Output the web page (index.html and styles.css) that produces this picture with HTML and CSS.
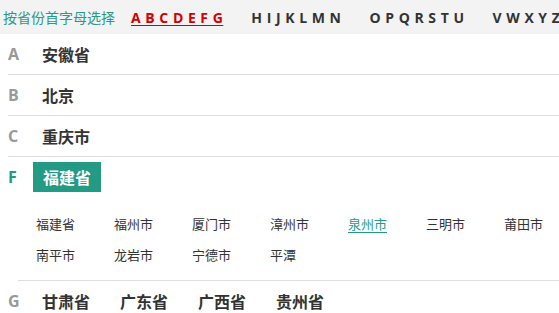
FILE: index.html
```html
<!DOCTYPE html>
<html lang="zh-CN">
<head>
  <meta charset="UTF-8" />
  <title>按省份首字母选择</title>
  <link rel="stylesheet" href="styles.css">
</head>
<body>
  <div class="topbar">
    <span class="tip">按省份首字母选择</span>
    <a class="group active" href="#">A B C D E F G</a>
    <a class="group" href="#">H I J K L M N</a>
    <a class="group" href="#">O P Q R S T U</a>
    <a class="group" href="#">V W X Y Z</a>
  </div>

  <div class="list">
    <div class="row">
      <span class="letter">A</span>
      <span class="prov">安徽省</span>
    </div>
    <div class="row">
      <span class="letter">B</span>
      <span class="prov">北京</span>
    </div>
    <div class="row">
      <span class="letter">C</span>
      <span class="prov">重庆市</span>
    </div>

    <div class="section">
      <div class="row open">
        <span class="letter">F</span>
        <span class="prov selected">福建省</span>
      </div>
      <div class="cities">
        <a href="#">福建省</a>
        <a href="#">福州市</a>
        <a href="#">厦门市</a>
        <a href="#">漳州市</a>
        <a href="#" class="current">泉州市</a>
        <a href="#">三明市</a>
        <a href="#">莆田市</a>
        <a href="#">南平市</a>
        <a href="#">龙岩市</a>
        <a href="#">宁德市</a>
        <a href="#">平潭</a>
      </div>
    </div>

    <div class="row">
      <span class="letter">G</span>
      <span class="prov multi">甘肃省</span>
      <span class="prov multi">广东省</span>
      <span class="prov multi">广西省</span>
      <span class="prov multi">贵州省</span>
    </div>
  </div>
</body>
</html>
```

FILE: styles.css
```css
body {
  margin: 0;
  font-family: "Noto Sans CJK SC", sans-serif;
  background: #fff;
  color: #333;
  overflow: hidden;
}

a {
  text-decoration: none;
  color: inherit;
}

.topbar {
  height: 34px;
  background: #f2f3f2;
  display: flex;
  align-items: center;
  padding-left: 3px;
  white-space: nowrap;
  overflow: hidden;
}

.tip {
  font-size: 14px;
  color: #2a9a88;
  margin-right: 16px;
}

.group {
  font-family: "Open Sans", sans-serif;
  font-weight: bold;
  font-size: 14px;
  letter-spacing: 0.5px;
  color: #333;
  margin-right: 28px;
}

.group.active {
  color: #d40000;
  text-decoration: underline;
  text-underline-offset: 2px;
}

.list {
  padding-left: 8px;
}

.row {
  height: 40px;
  display: flex;
  align-items: center;
  border-bottom: 1px solid #dedede;
}

.letter {
  width: 34px;
  font-family: "Open Sans", sans-serif;
  font-weight: bold;
  font-size: 16px;
  color: #999;
}

.prov {
  font-size: 16px;
  font-weight: bold;
  color: #333;
}

.prov.multi {
  width: 78px;
}

.row.open {
  border-bottom: none;
}

.row.open .letter {
  color: #229a84;
}

.prov.selected {
  background: #229a84;
  color: #fff;
  padding: 0 10px;
  margin-left: -9px;
  height: 30px;
  line-height: 30px;
}

.cities {
  display: grid;
  grid-template-columns: repeat(6, 78px) auto;
  padding: 11px 0 10px 18px;
  margin-left: 10px;
  border-bottom: 1px solid #dedede;
}

.cities a {
  height: 31px;
  line-height: 31px;
  font-size: 13px;
  color: #333;
  justify-self: start;
}

.cities a.current {
  color: #229a84;
  text-decoration: underline;
  text-underline-offset: 3px;
}
```
